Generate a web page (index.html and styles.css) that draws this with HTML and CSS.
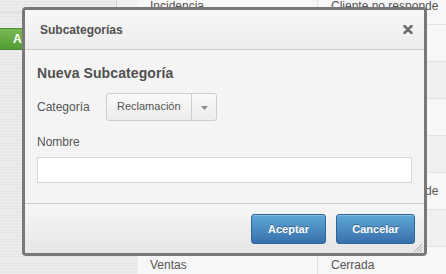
FILE: index.html
```html
<!DOCTYPE html>
<html lang="es">
<head>
<meta charset="utf-8">
<title>Subcategorías</title>
<link rel="stylesheet" href="styles.css">
</head>
<body>
<div class="page">
  <aside class="sidebar">
    <div class="side-top"><span class="side-cell"></span></div>
    <button class="btn-green">Añadir</button>
  </aside>
  <div class="table">
    <div class="row"><span class="c1">Incidencia</span><span class="c2">Cliente no responde</span></div>
    <div class="row"><span class="c1"></span><span class="c2"></span></div>
    <div class="row alt"><span class="c1"></span><span class="c2"></span></div>
    <div class="row"><span class="c1"></span><span class="c2"></span></div>
    <div class="row alt"><span class="c1"></span><span class="c2"></span></div>
    <div class="row"><span class="c1"></span><span class="c2">Cliente no responde</span></div>
    <div class="row alt"><span class="c1"></span><span class="c2"></span></div>
    <div class="row"><span class="c1">Ventas</span><span class="c2">Cerrada</span></div>
  </div>
</div>

<div class="dialog">
  <div class="dlg-header">
    <span class="dlg-title">Subcategorías</span>
    <svg class="dlg-close" width="10" height="9" viewBox="0 0 10 9"><path d="M1.5 1 L8.5 8 M8.5 1 L1.5 8" stroke="#6e6e6e" stroke-width="2.5" stroke-linecap="round"/></svg>
  </div>
  <div class="dlg-body">
    <h2 class="dlg-heading">Nueva Subcategoría</h2>
    <div class="field-row">
      <label class="lbl lbl-inline">Categoría</label>
      <div class="select">
        <span class="select-text">Reclamación</span>
        <span class="select-caret"><svg width="7" height="4" viewBox="0 0 7 4"><path d="M0 0 H7 L3.5 4 Z" fill="#888"/></svg></span>
      </div>
    </div>
    <label class="lbl lbl-block">Nombre</label>
    <input class="text-input" type="text">
  </div>
  <div class="dlg-footer">
    <button class="btn-blue btn-ok">Aceptar</button>
    <button class="btn-blue btn-cancel">Cancelar</button>
  </div>
  <svg class="grip" width="10" height="10" viewBox="0 0 10 10"><path d="M9 1 L1 9 M9 4 L4 9 M9 7 L7 9" stroke="#aaa" stroke-width="1"/></svg>
</div>
</body>
</html>
```

FILE: styles.css
```css
html, body {
  margin: 0;
  padding: 0;
}
body {
  width: 446px;
  height: 274px;
  overflow: hidden;
  position: relative;
  font-family: "Liberation Sans", Arial, sans-serif;
  color: #555;
  background: #ececec;
}
.page {
  display: flex;
  height: 274px;
}
.sidebar {
  width: 138px;
  flex: none;
  background-color: #eaeaea;
  background-image:
    repeating-linear-gradient(0deg, rgba(255,255,255,0.35) 0 1px, transparent 1px 3px),
    repeating-linear-gradient(90deg, rgba(0,0,0,0.025) 0 1px, transparent 1px 2px);
  display: flex;
  flex-direction: column;
}
.side-top {
  height: 12px;
  border-bottom: 1px solid #dcdcdc;
  display: flex;
  justify-content: flex-end;
}
.side-cell {
  width: 21px;
  height: 12px;
  border-left: 1px solid #d6d6d6;
  background: #f0f0f0;
}
.btn-green {
  margin-top: 15px;
  width: 100px;
  height: 22px;
  border: 1px solid #4b8c2e;
  border-left: none;
  background: linear-gradient(#78ba50, #539a34);
  color: #fff;
  font-family: "Liberation Sans", Arial, sans-serif;
  font-weight: bold;
  font-size: 12px;
  text-align: left;
  padding: 0 0 0 13px;
}
.table {
  flex: 1;
  margin-top: -12px;
  background: #f7f7f7;
}
.row {
  display: grid;
  grid-template-columns: 180px 1fr;
  height: 36px;
  border-bottom: 1px solid #e2e2e2;
  align-items: center;
  font-size: 12px;
  color: #555;
  background: #f7f7f7;
  white-space: nowrap;
}
.row.alt {
  background: #f0f0f0;
}
.c1 {
  padding-left: 12px;
  border-right: 1px solid #e2e2e2;
  height: 36px;
  line-height: 36px;
}
.c2 {
  padding-left: 13px;
}

.dialog {
  position: absolute;
  left: 22px;
  top: 7px;
  width: 405px;
  height: 249px;
  box-sizing: border-box;
  border: 3px solid #787878;
  border-radius: 4px;
  background: #f4f4f4;
  display: flex;
  flex-direction: column;
  overflow: hidden;
}
.dlg-header {
  height: 39px;
  flex: none;
  border-bottom: 1px solid #cfcfcf;
  background: linear-gradient(#f8f8f8, #ececec);
  display: flex;
  align-items: center;
  justify-content: space-between;
  padding: 0 11px 0 15px;
}
.dlg-title {
  font-weight: bold;
  font-size: 12px;
  color: #505050;
}
.dlg-close {
  display: block;
}
.dlg-body {
  height: 153px;
  flex: none;
  box-sizing: border-box;
  padding: 15px 12px 0 12px;
  display: flex;
  flex-direction: column;
}
.dlg-heading {
  margin: 0;
  font-size: 14px;
  line-height: 16px;
  font-weight: bold;
  color: #505050;
  letter-spacing: 0.1px;
}
.field-row {
  display: flex;
  align-items: center;
  margin-top: 12px;
}
.lbl {
  font-size: 12px;
  line-height: 14px;
  color: #555;
}
.lbl-inline {
  width: 69px;
}
.lbl-block {
  margin-top: 14px;
}
.select {
  width: 111px;
  height: 28px;
  box-sizing: border-box;
  border: 1px solid #cdcdcd;
  border-radius: 3px;
  background: linear-gradient(#fafafa, #ececec);
  display: flex;
  align-items: stretch;
}
.select-text {
  width: 85px;
  box-sizing: border-box;
  padding-left: 10px;
  font-size: 11px;
  line-height: 24px;
  color: #555;
  border-right: 1px solid #cdcdcd;
}
.select-caret {
  flex: 1;
  display: flex;
  align-items: center;
  justify-content: center;
  padding-top: 1px;
}
.text-input {
  margin: 8px 0 0 0;
  height: 26px;
  box-sizing: border-box;
  border: 1px solid #d8d8d8;
  background: #fff;
  padding: 0 6px;
  outline: none;
}
.dlg-footer {
  flex: 1;
  border-top: 1px solid #cbcbcb;
  background: linear-gradient(#f6f6f6, #e6e6e6);
  display: flex;
  justify-content: flex-end;
  align-items: flex-start;
  gap: 10px;
  padding: 10px 9px 0 0;
}
.btn-blue {
  height: 30px;
  box-sizing: border-box;
  border: 1px solid #2f679d;
  border-radius: 3px;
  background: linear-gradient(#5ea8d8, #3870ab);
  box-shadow: inset 0 1px 0 rgba(255,255,255,0.25);
  color: #fff;
  font-family: "Liberation Sans", Arial, sans-serif;
  font-weight: bold;
  font-size: 11px;
  text-shadow: 0 -1px 0 rgba(0,0,0,0.35);
  padding: 0;
}
.btn-ok {
  width: 75px;
}
.btn-cancel {
  width: 79px;
}
.grip {
  position: absolute;
  right: 1px;
  bottom: 0px;
}
```
